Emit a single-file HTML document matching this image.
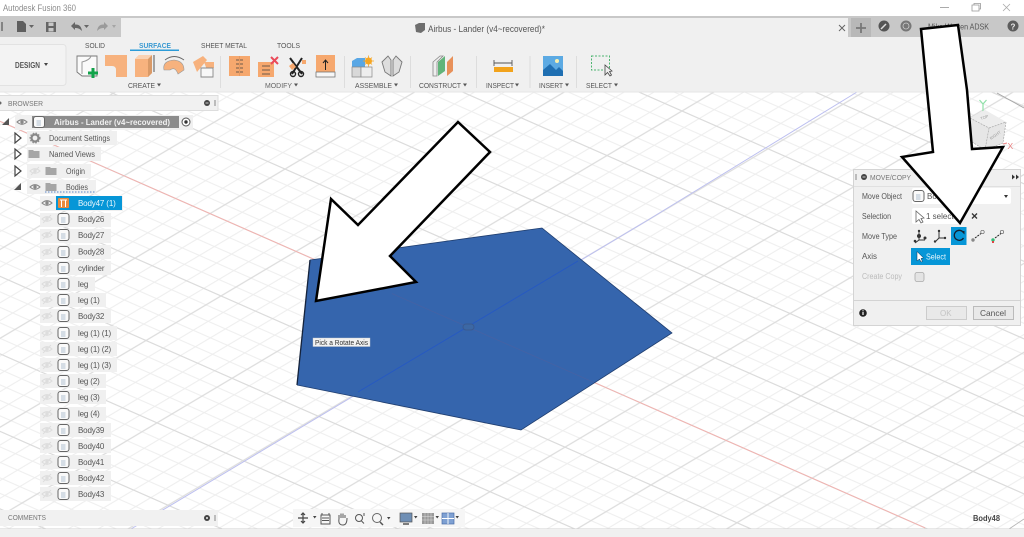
<!DOCTYPE html>
<html><head><meta charset="utf-8"><title>Autodesk Fusion 360</title>
<style>
html,body{margin:0;padding:0;background:#fff;width:1024px;height:537px;overflow:hidden}
svg{display:block;font-family:"Liberation Sans",sans-serif;filter:blur(.3px);overflow:hidden}
text{fill:#555}
.t{font-size:8px;letter-spacing:-.15px}
</style></head><body>
<svg xmlns="http://www.w3.org/2000/svg" width="1024" height="537" viewBox="0 0 1024 537">
<defs>
<pattern id="g" patternUnits="userSpaceOnUse" width="100" height="100" patternTransform="matrix(.86 .378 .75 -.4455 387.5 330.375)">
<path d="M10 0V100M30 0V100M70 0V100M90 0V100M0 10H100M0 30H100M0 70H100M0 90H100" stroke="#eeeeee" stroke-width="1.400" fill="none"/>
<path d="M50 0V100M0 50H100" stroke="#dcdcdc" stroke-width="1.600" fill="none"/>
</pattern>
<g id="eye"><path d="M-5 0Q0-4.500 5 0Q0 4.500-5 0Z" fill="none" stroke="#888" stroke-width="1.100"/><circle r="1.700" fill="#888"/></g>
<g id="eyeoff"><path d="M-5 0Q0-4.500 5 0Q0 4.500-5 0Z" fill="none" stroke="#ddd" stroke-width="1.100"/><circle r="1.700" fill="#ddd"/><path d="M-4 4L4-4" stroke="#ddd"/></g>
<g id="body"><rect x="-5.500" y="-5.500" width="11" height="11" rx="2.500" fill="#fafafa" stroke="#666" stroke-width="1"/><rect x="-2.500" y="-2" width="4.500" height="6" fill="#d5dde5"/></g>
<g id="folder"><path d="M-5.500-4H-1L0-3H5.500V4H-5.500Z" fill="#a6a6a6"/></g>
<path id="tri" d="M-3-5L3 0L-3 5Z" fill="#fff" stroke="#444" stroke-width="1.200"/>
</defs>

<!-- canvas -->
<rect width="1024" height="537" fill="#fff"/>
<rect y="92" width="1024" height="437" fill="url(#g)"/>
<path d="M0 121.300L925 527.800" stroke="#f2b3b0" stroke-width="1"/>
<path d="M131 529L648 220L857 92" stroke="#bcbff0" stroke-width="1" fill="none"/>
<path d="M997 93L1024 108" stroke="#a5a5a5" stroke-width=".9"/>
<path d="M1009 529L1024 519" stroke="#b5b5b5" stroke-width=".9"/>

<!-- pentagon -->
<path d="M310 260L542 228L672 333L521 430L297 385Z" fill="#3565ad"/>
<path d="M310 260L297 385" stroke="#15233c" stroke-width="1.300"/>
<path d="M310 260L542 228L672 333L521 430L297 385" fill="none" stroke="#1f3d6e" stroke-width=".8"/>
<path d="M392 293.600L594 382.400" stroke="#55609c" stroke-width=".7" opacity=".6"/>
<path d="M358 392L578 261" stroke="#2558c4" stroke-width=".8"/>
<rect x="463" y="324" width="11" height="6" rx="3" fill="#3c68a5" stroke="#3a5a90" stroke-width="1"/>
<rect x="313" y="338" width="57" height="8.500" fill="#f2f2f2" stroke="#ccc" stroke-width=".4"/>
<text x="315" y="345" font-size="7" textLength="53" lengthAdjust="spacingAndGlyphs" style="fill:#333">Pick a Rotate Axis</text>

<!-- title bar -->
<rect width="1024" height="16" fill="#fff"/>
<text x="3" y="11" font-size="8.800" textLength="73" lengthAdjust="spacingAndGlyphs" style="fill:#8c8c8c">Autodesk Fusion 360</text>
<path d="M940 7.500H949" stroke="#aaa"/>
<path d="M972 5H979V11H972ZM974 5V3.500H980.500V9H979" fill="none" stroke="#999" stroke-width=".8"/>
<path d="M1003 4L1010 11M1010 4L1003 11" stroke="#aaa" stroke-width=".8"/>
<rect y="16" width="1024" height="21" fill="#c8c8c8"/>
<rect x="121" y="18" width="727" height="19" fill="#f0f0f0"/>
<rect y="37" width="1024" height="55" fill="#f0f0f0"/>
<rect y="91.500" width="1024" height="1" fill="#e6e6e6"/>

<!-- quick access -->
<path d="M1 22H3V31H1Z" fill="#666" opacity=".7"/>
<path d="M17 21H23L26 24V32H17Z" fill="#5f5f5f"/><path d="M29 25H34L31.500 28Z" fill="#666"/>
<path d="M46 22H56V32H46Z" fill="#666"/><rect x="48.500" y="22.500" width="5" height="3.500" fill="#c8c8c8"/><rect x="48.500" y="28" width="5" height="3.500" fill="#c8c8c8"/>
<path d="M71 26L75 22V24.500Q81 24 82 31Q79 27.500 75 28V30Z" fill="#666"/><path d="M84 25H89L86.500 28Z" fill="#666"/>
<path d="M108 26L104 22V24.500Q98 24 97 31Q100 27.500 104 28V30Z" fill="#9a9a9a"/><path d="M112 25H116L114 28Z" fill="#a5a5a5"/>

<!-- doc tab -->
<path d="M415 25L419 23H425V30L421 33L416 32Z" fill="#6e6e6e"/>
<text x="428" y="32" font-size="9.200" textLength="117" lengthAdjust="spacingAndGlyphs">Airbus - Lander (v4~recovered)*</text>
<path d="M839 25L845 31M845 25L839 31" stroke="#666" stroke-width="1"/>
<rect x="851" y="18" width="20" height="19" fill="#b8b8b8"/>
<path d="M861 23V33M856 28H866" stroke="#777" stroke-width="1.800"/>
<circle cx="884" cy="26" r="5.500" fill="#555"/><path d="M881 29L886 24" stroke="#ddd" stroke-width="1.500"/>
<circle cx="906" cy="26" r="5.500" fill="#777"/><circle cx="906" cy="26" r="3" fill="none" stroke="#ccc" stroke-width=".8"/>
<text x="928" y="29.500" font-size="8.200" textLength="61" lengthAdjust="spacingAndGlyphs">Mike Warren ADSK</text>
<circle cx="1013" cy="26" r="5.500" fill="#5c5c5c"/><text x="1010.500" y="29.500" font-size="8" font-weight="bold" style="fill:#eee">?</text>

<!-- tabs -->
<text x="85" y="48" font-size="7.200" textLength="20" lengthAdjust="spacingAndGlyphs">SOLID</text>
<text x="139" y="48" font-size="7.200" textLength="32" lengthAdjust="spacingAndGlyphs" font-weight="bold" style="fill:#3a9ad2">SURFACE</text>
<rect x="130" y="49.500" width="49" height="1.500" fill="#2b9bd8"/>
<text x="201" y="48" font-size="7.200" textLength="46" lengthAdjust="spacingAndGlyphs">SHEET METAL</text>
<text x="277" y="48" font-size="7.200" textLength="23" lengthAdjust="spacingAndGlyphs">TOOLS</text>

<!-- design -->
<rect x="-4" y="44.500" width="70" height="41" rx="3" fill="#f3f3f3" stroke="#e2e2e2"/>
<text x="15" y="68" font-size="7.800" font-weight="bold" textLength="25" lengthAdjust="spacingAndGlyphs">DESIGN</text>
<path d="M44 63H48L46 66Z" fill="#444"/>

<!-- create icons -->
<path d="M77 56H97V76H82L77 72Z" fill="#fafafa" stroke="#777" stroke-width=".9"/>
<path d="M82 74V62Q90 60 91 56" fill="none" stroke="#999"/>
<path d="M93 68V78M88 73H98" stroke="#12a34a" stroke-width="3"/>
<path d="M105 55H127V77H116V70Q116 66 112 66H105Z" fill="#f7b27e"/>
<path d="M135 59L139 55H152V73L148 77H135Z" fill="#f7b27e"/><path d="M148 59V77L152 73V55Z" fill="#d99a68"/><path d="M135 59H148L152 55H139Z" fill="#fad2b3"/>
<path d="M154 55V72" stroke="#444" stroke-width=".9"/>
<path d="M164 70Q162 61 174 60Q184 61 184 70L178 74Q175 66 170 70Z" fill="#f7b27e" stroke="#999" stroke-width=".6"/>
<path d="M165 60Q174 53 184 60" fill="none" stroke="#666" stroke-width=".9"/>
<path d="M193 62L203 56L207 60L197 72Z" fill="#f7b27e"/><path d="M204 62L214 62V68L207 70Z" fill="#f7b27e"/>
<path d="M201 68H213V77H201Z" fill="#f8f8f8" stroke="#888" stroke-width=".9"/>
<text x="128" y="88" font-size="7.600" textLength="27" lengthAdjust="spacingAndGlyphs">CREATE</text><path d="M157 83.500H161L159 86.500Z" fill="#555"/>
<path d="M220.500 56V88" stroke="#ddd"/>

<!-- modify icons -->
<rect x="229" y="56" width="21" height="20" fill="#f6a86e"/>
<path d="M236 60H243M236 64H243M236 68H243M236 72H243" stroke="#6e5a4a" stroke-width="1"/><path d="M239.500 56V76" stroke="#e59a63" stroke-width="1"/>
<rect x="258" y="62" width="16" height="15" fill="#f6a86e"/>
<path d="M262 66H270M262 70H270M262 74H270" stroke="#6e5a4a"/>
<path d="M271 57L278 64M278 57L271 64" stroke="#ea4a5a" stroke-width="2"/>
<path d="M290 58L302 74M302 58L292 74" stroke="#222" stroke-width="2"/>
<circle cx="293" cy="74" r="2.500" fill="none" stroke="#222" stroke-width="1.400"/><circle cx="301" cy="74" r="2.500" fill="none" stroke="#222" stroke-width="1.400"/>
<rect x="302" y="60" width="4" height="4" fill="#f6a86e"/><path d="M289 66L293 63L296 67L292 70Z" fill="#f6a86e"/>
<rect x="316" y="55" width="19" height="17" fill="#f6a86e"/><rect x="316" y="72" width="19" height="5" fill="#f7f7f7" stroke="#777" stroke-width=".8"/>
<path d="M325.500 70V61M323 63L325.500 60L328 63" stroke="#222" fill="none"/>
<text x="265" y="88" font-size="7.600" textLength="27" lengthAdjust="spacingAndGlyphs" style="fill:#666">MODIFY</text><path d="M294 83.500H298L296 86.500Z" fill="#555"/>
<path d="M344.500 56V88" stroke="#ddd"/>

<!-- assemble -->
<path d="M352 61L357 58H365V68H352Z" fill="#59a7e5"/><path d="M352 67H361V77H352Z" fill="#d8d8d8" stroke="#888" stroke-width=".7"/><path d="M361 67H372V77H361Z" fill="#eee" stroke="#888" stroke-width=".7"/>
<circle cx="368.500" cy="61" r="3.500" fill="#f6a623"/><path d="M368.500 55.500V66.500M363 61H374M365 57.500L372 64.500M372 57.500L365 64.500" stroke="#f6a623" stroke-width=".8"/>
<path d="M382 62L388 56L391 60V76L385 72Z" fill="#ddd" stroke="#777" stroke-width=".9"/><path d="M402 62L396 56L393 60V76L399 72Z" fill="#ddd" stroke="#777" stroke-width=".9"/>
<text x="355" y="88" font-size="7.600" textLength="37" lengthAdjust="spacingAndGlyphs">ASSEMBLE</text><path d="M394 83.500H398L396 86.500Z" fill="#555"/>
<path d="M410.500 56V88" stroke="#ddd"/>

<!-- construct -->
<path d="M433 62L440 56H443L437 62V76H433Z" fill="#eee" stroke="#888" stroke-width=".8"/>
<path d="M438 62L445 56V71L438 76Z" fill="#62b47a"/>
<path d="M447 62L453 56V71L447 76Z" fill="#e8915a"/>
<text x="419" y="88" font-size="7.600" textLength="42" lengthAdjust="spacingAndGlyphs">CONSTRUCT</text><path d="M463 83.500H467L465 86.500Z" fill="#555"/>
<path d="M476.500 56V88" stroke="#ddd"/>

<!-- inspect -->
<path d="M494 63H512M494 60V66M512 60V66" stroke="#555" stroke-width=".9"/>
<rect x="494" y="67" width="19" height="5" fill="#f2a31c"/>
<text x="486" y="88" font-size="7.600" textLength="28" lengthAdjust="spacingAndGlyphs">INSPECT</text><path d="M515 83.500H519L517 86.500Z" fill="#555"/>
<path d="M530 56V88" stroke="#ddd"/>

<!-- insert -->
<rect x="543" y="56" width="20" height="20" fill="#5caae3"/>
<circle cx="557" cy="61" r="2" fill="#f7efb0"/>
<path d="M543 76V70L550 64L556 70L559 67L563 71V76Z" fill="#1f6fb2"/>
<text x="539" y="88" font-size="7.600" textLength="24" lengthAdjust="spacingAndGlyphs">INSERT</text><path d="M565 83.500H569L567 86.500Z" fill="#555"/>
<path d="M576.500 56V88" stroke="#ddd"/>

<!-- select -->
<rect x="591.500" y="56" width="18" height="14" fill="none" stroke="#4cb56f" stroke-width="1" stroke-dasharray="2 1.500"/>
<path d="M605 65L605 75L607.500 72.500L610 76L611.500 75L609.500 71.500L612 71Z" fill="#eee" stroke="#444" stroke-width=".8"/>
<text x="586" y="88" font-size="7.600" textLength="26" lengthAdjust="spacingAndGlyphs">SELECT</text><path d="M614 83.500H618L616 86.500Z" fill="#555"/>

<!-- browser header -->
<rect x="-2" y="95.500" width="220" height="15" fill="#f1f1f1" stroke="#ddd"/>
<circle cx="0" cy="103" r="1.500" fill="#666"/>
<text x="8" y="106" font-size="7.500" textLength="35" lengthAdjust="spacingAndGlyphs" style="fill:#777">BROWSER</text>
<circle cx="207" cy="103" r="3" fill="#444"/><path d="M205.500 103H208.500" stroke="#eee" stroke-width=".8"/>
<path d="M215 100V106" stroke="#aaa" stroke-width="1.500"/>

<!-- tree chips -->
<g fill="#f0f0f0">
<rect x="15" y="115" width="178" height="15"/>
<rect x="27" y="131" width="90" height="14"/>
<rect x="27" y="147" width="74" height="14"/>
<rect x="27" y="164" width="64" height="14"/>
<rect x="27" y="180" width="69" height="14"/>
<rect x="40" y="196" width="83" height="15"/>
<rect x="40" y="213" width="71" height="14"/><rect x="40" y="229" width="71" height="14"/><rect x="40" y="245" width="71" height="14"/>
<rect x="40" y="261" width="71" height="14"/><rect x="40" y="277" width="55" height="14"/><rect x="40" y="293" width="66" height="14"/>
<rect x="40" y="309" width="71" height="14"/><rect x="40" y="326" width="77" height="14"/><rect x="40" y="342" width="77" height="14"/>
<rect x="40" y="358" width="77" height="14"/><rect x="40" y="374" width="66" height="14"/><rect x="40" y="390" width="66" height="14"/>
<rect x="40" y="407" width="66" height="14"/><rect x="40" y="423" width="71" height="14"/><rect x="40" y="439" width="71" height="14"/>
<rect x="40" y="455" width="71" height="14"/><rect x="40" y="471" width="71" height="14"/><rect x="40" y="487" width="71" height="14"/>
</g>

<!-- root -->
<path d="M2 125L9 118V125Z" fill="#555"/>
<use href="#eye" x="22" y="122"/>
<rect x="32" y="116" width="147" height="12" fill="#8c8c8c"/>
<use href="#body" x="39" y="122"/>
<text x="54" y="125" font-size="8.300" font-weight="bold" textLength="116" lengthAdjust="spacingAndGlyphs" style="fill:#f2f2f2">Airbus - Lander (v4~recovered)</text>
<circle cx="186" cy="122" r="4" fill="#fff" stroke="#555"/><circle cx="186" cy="122" r="1.700" fill="#333"/>

<use href="#tri" x="18" y="138"/>
<circle cx="35" cy="138" r="3.500" fill="none" stroke="#888" stroke-width="2.200"/><circle cx="35" cy="138" r="5" fill="none" stroke="#888" stroke-width="1" stroke-dasharray="1.500 1.500"/>
<text x="49" y="141" font-size="8" textLength="61" lengthAdjust="spacingAndGlyphs">Document Settings</text>
<use href="#tri" x="18" y="154"/><use href="#folder" x="34" y="154"/>
<text x="49" y="157" font-size="8" textLength="46" lengthAdjust="spacingAndGlyphs">Named Views</text>
<use href="#tri" x="18" y="171"/><use href="#eyeoff" x="35" y="171"/><use href="#folder" x="51" y="171"/>
<text x="66" y="174" font-size="8" textLength="19" lengthAdjust="spacingAndGlyphs">Origin</text>
<path d="M14 190L21 183V190Z" fill="#555"/><use href="#eye" x="35" y="187"/><use href="#folder" x="51" y="187"/>
<text x="66" y="190" font-size="8" textLength="22" lengthAdjust="spacingAndGlyphs">Bodies</text>
<path d="M45 192H95" stroke="#5c86c8" stroke-width="1" stroke-dasharray="1.500 1.500"/>

<!-- body rows -->
<use href="#eye" x="47" y="203"/>
<rect x="56" y="196" width="66" height="14" fill="#0696d7"/>
<rect x="58" y="198" width="11" height="10" rx="1" fill="#e88a3c"/><path d="M60 200H67M61.500 200V207M65.500 200V207" stroke="#fff" stroke-width="1"/>
<text x="78" y="206" class="t" style="fill:#eef8fd">Body47 (1)</text>

<use href="#eyeoff" x="47" y="219"/><use href="#body" x="63.500" y="219"/><text x="78" y="222" class="t">Body26</text>
<use href="#eyeoff" x="47" y="235"/><use href="#body" x="63.500" y="235"/><text x="78" y="238" class="t">Body27</text>
<use href="#eyeoff" x="47" y="252"/><use href="#body" x="63.500" y="252"/><text x="78" y="254.500" class="t">Body28</text>
<use href="#eyeoff" x="47" y="268"/><use href="#body" x="63.500" y="268"/><text x="78" y="271" class="t">cylinder</text>
<use href="#eyeoff" x="47" y="284"/><use href="#body" x="63.500" y="284"/><text x="78" y="287" class="t">leg</text>
<use href="#eyeoff" x="47" y="300"/><use href="#body" x="63.500" y="300"/><text x="78" y="303" class="t">leg (1)</text>
<use href="#eyeoff" x="47" y="316"/><use href="#body" x="63.500" y="316"/><text x="78" y="319" class="t">Body32</text>
<use href="#eyeoff" x="47" y="333"/><use href="#body" x="63.500" y="333"/><text x="78" y="336" class="t">leg (1) (1)</text>
<use href="#eyeoff" x="47" y="349"/><use href="#body" x="63.500" y="349"/><text x="78" y="352" class="t">leg (1) (2)</text>
<use href="#eyeoff" x="47" y="365"/><use href="#body" x="63.500" y="365"/><text x="78" y="368" class="t">leg (1) (3)</text>
<use href="#eyeoff" x="47" y="381"/><use href="#body" x="63.500" y="381"/><text x="78" y="384" class="t">leg (2)</text>
<use href="#eyeoff" x="47" y="397"/><use href="#body" x="63.500" y="397"/><text x="78" y="400" class="t">leg (3)</text>
<use href="#eyeoff" x="47" y="414"/><use href="#body" x="63.500" y="414"/><text x="78" y="416.500" class="t">leg (4)</text>
<use href="#eyeoff" x="47" y="430"/><use href="#body" x="63.500" y="430"/><text x="78" y="433" class="t">Body39</text>
<use href="#eyeoff" x="47" y="446"/><use href="#body" x="63.500" y="446"/><text x="78" y="449" class="t">Body40</text>
<use href="#eyeoff" x="47" y="462"/><use href="#body" x="63.500" y="462"/><text x="78" y="465" class="t">Body41</text>
<use href="#eyeoff" x="47" y="478"/><use href="#body" x="63.500" y="478"/><text x="78" y="481" class="t">Body42</text>
<use href="#eyeoff" x="47" y="494"/><use href="#body" x="63.500" y="494"/><text x="78" y="497" class="t">Body43</text>

<!-- comments -->
<rect x="0" y="510" width="218" height="16" fill="#f1f1f1"/>
<text x="8" y="520" font-size="7.500" textLength="38" lengthAdjust="spacingAndGlyphs" style="fill:#777">COMMENTS</text>
<circle cx="207" cy="518" r="3" fill="#444"/><circle cx="207" cy="518" r="1" fill="#eee"/>
<path d="M215 515V521" stroke="#aaa" stroke-width="1.500"/>

<!-- bottom bar -->
<rect y="528.500" width="1024" height="1" fill="#d0d0d0"/>
<rect y="529" width="1024" height="8" fill="#f0f0f0"/>
<rect x="293" y="509" width="172" height="18" fill="#f6f6f6"/>
<path d="M303 513V523M298 518H308M301 515L303 513L305 515M301 521L303 523L305 521" stroke="#444" stroke-width="1.200" fill="none"/>
<path d="M313 516H316.500L314.700 518.500Z" fill="#444"/>
<rect x="321" y="515" width="9" height="9" fill="none" stroke="#555"/><path d="M322 513V515M329 513V515M322 518H329M322 520.500H329" stroke="#555"/>
<path d="M339 519V515M341 518V513.500M343 518V513.500M345 518V515M339 519Q338 525 343 525Q347 525 347 518" fill="none" stroke="#555"/>
<circle cx="359" cy="518" r="3.500" fill="none" stroke="#555"/><path d="M361.500 521L364 523.500M364 513V516" stroke="#555"/>
<circle cx="377" cy="518" r="4.500" fill="none" stroke="#666"/><path d="M380 522L383 525" stroke="#555" stroke-width="1.500"/>
<path d="M387 517H390.500L388.700 519.500Z" fill="#444"/>
<rect x="400" y="513" width="12" height="9" fill="#6f8fb5" stroke="#555" stroke-width=".7"/><path d="M403 524H409" stroke="#555" stroke-width="1.500"/>
<path d="M414 516H417.500L415.700 518.500Z" fill="#444"/>
<rect x="422" y="513" width="12" height="11" fill="#999"/><path d="M425 513V524M428 513V524M431 513V524M422 516.500H434M422 520H434" stroke="#ddd" stroke-width=".5"/>
<path d="M435.500 516H439L437.200 518.500Z" fill="#444"/>
<rect x="442" y="513" width="12" height="11" fill="#7ea0d2" stroke="#4a6ea8" stroke-width=".7"/><path d="M448 513V524M442 518.500H454" stroke="#fff" stroke-width=".9"/>
<path d="M455.500 516H459L457.200 518.500Z" fill="#444"/>
<text x="973" y="521" font-size="8" font-weight="bold" textLength="27" lengthAdjust="spacingAndGlyphs" style="fill:#444">Body48</text>

<!-- view cube -->
<path d="M979.500 100L983 104L986.500 100M983 104V116" stroke="#8fe0a8" stroke-width="1.200" fill="none"/>
<path d="M1003 144L1007 143" stroke="#e88" stroke-width="1"/>
<text x="1007.500" y="149" font-size="8.500" style="fill:#e98080">X</text>
<path d="M970 118L985 110L1006 122L1003 143L985 150L972 142Z" fill="#e6e6e6"/>
<path d="M970 118L985 110L1006 122L989 128Z" fill="#ededed"/>
<path d="M970 118L989 128L985 150M989 128L1006 122M1006 122L1003 143L985 150L972 142L970 118" fill="none" stroke="#aaa" stroke-width=".7" stroke-dasharray="2 1"/>
<text x="981" y="120" font-size="4" transform="rotate(-20 981 120)" style="fill:#999">TOP</text>
<text x="991" y="140" font-size="4" transform="rotate(-35 991 140)" style="fill:#999">RIGHT</text>

<!-- dialog -->
<rect x="853.500" y="169.500" width="167" height="156" fill="#f0f0f0" stroke="#d4d4d4"/>
<path d="M856 174V180" stroke="#999" stroke-width="1.200"/>
<circle cx="864" cy="177" r="3" fill="#444"/><path d="M862.500 177H865.500" stroke="#eee" stroke-width=".8"/>
<text x="870" y="180" font-size="7.300" textLength="41" lengthAdjust="spacingAndGlyphs" style="fill:#777">MOVE/COPY</text>
<path d="M1012 174.500L1015 177L1012 179.500ZM1016 174.500L1019 177L1016 179.500Z" fill="#333"/>
<rect x="854" y="186" width="166" height=".8" fill="#ddd"/>
<text x="862" y="199" font-size="7.800" textLength="40" lengthAdjust="spacingAndGlyphs">Move Object</text>
<rect x="912" y="188" width="99" height="16" rx="2" fill="#fff"/>
<use href="#body" x="918.500" y="196"/>
<text x="927" y="199" font-size="8">Body47</text>
<path d="M1004 195H1008L1006 198Z" fill="#333"/>
<text x="862" y="219" font-size="7.800" textLength="29" lengthAdjust="spacingAndGlyphs">Selection</text>
<rect x="912" y="208" width="50" height="16" rx="2" fill="#fff"/>
<path d="M916 211V222L919 219.500L921 223L923 222L921 218.500L924 218Z" fill="#fff" stroke="#666" stroke-width=".8"/>
<text x="926" y="219" font-size="8">1 selected</text>
<path d="M972 213.500L977 218.500M977 213.500L972 218.500" stroke="#333" stroke-width="1.300"/>
<text x="862" y="239" font-size="7.800" textLength="35" lengthAdjust="spacingAndGlyphs">Move Type</text>
<path d="M919 231V240H925M919 240L915 243" fill="none" stroke="#333" stroke-width="1"/><circle cx="919" cy="236" r="2" fill="#333"/><circle cx="919" cy="231" r="1.200" fill="#333"/><circle cx="925" cy="238" r="1.500" fill="#333"/><circle cx="915" cy="241" r="1.300" fill="#333"/>
<path d="M939 232V238H945M939 238L935 242" fill="none" stroke="#333" stroke-width="1"/><circle cx="939" cy="231" r="1.200" fill="#333"/><circle cx="945" cy="238" r="1.200" fill="#333"/><circle cx="935" cy="241.500" r="1.200" fill="#333"/>
<rect x="951" y="227" width="15.500" height="18" fill="#0696d7"/>
<path d="M963 232A5 5 0 1 0 963.500 238" fill="none" stroke="#123" stroke-width="1.300"/><path d="M961 231H964.500V234.500Z" fill="#123"/>
<circle cx="973" cy="240" r="1.700" fill="#888"/><circle cx="982.500" cy="232" r="1.700" fill="none" stroke="#666" stroke-width=".7"/><path d="M975 238L981 233.500" stroke="#222" stroke-dasharray="2 1"/>
<circle cx="993" cy="240" r="1.700" fill="#3b7"/><rect x="992" y="241" width="2" height="2" fill="#d44"/><circle cx="1002" cy="232" r="1.700" fill="none" stroke="#666" stroke-width=".7"/><path d="M995 238L1001 233.500" stroke="#222" stroke-dasharray="2 1"/>
<text x="862" y="259" font-size="7.800" textLength="15" lengthAdjust="spacingAndGlyphs">Axis</text>
<rect x="911" y="248" width="39" height="17" fill="#0696d7"/>
<path d="M917 251.500V261L919.500 259L921 262L922.500 261.500L921 258.500L923.500 258Z" fill="#fff" stroke="#135" stroke-width=".5"/>
<text x="926" y="259.500" font-size="8" textLength="20" lengthAdjust="spacingAndGlyphs" style="fill:#e8f6fc">Select</text>
<text x="862" y="279" font-size="7.800" textLength="40" lengthAdjust="spacingAndGlyphs" style="fill:#bbb">Create Copy</text>
<rect x="915" y="272.500" width="9" height="9" rx="2" fill="#e4e4e4" stroke="#aaa" stroke-width=".8"/>
<rect x="854" y="300" width="166" height=".8" fill="#ccc"/>
<circle cx="863" cy="313" r="3.800" fill="#222"/><rect x="862.400" y="312" width="1.200" height="3" fill="#fff"/><rect x="862.400" y="310.300" width="1.200" height="1" fill="#fff"/>
<rect x="926.500" y="306.500" width="40" height="13" fill="#e9e9e9" stroke="#ccc"/>
<text x="940" y="316" font-size="8" style="fill:#c4c4c4">OK</text>
<rect x="973.500" y="306.500" width="40" height="13" fill="#e9e9e9" stroke="#bbb"/>
<text x="980" y="316" font-size="8.300" textLength="26" lengthAdjust="spacingAndGlyphs">Cancel</text>

<!-- annotation arrows -->
<path d="M458 122L490 152L390 256L416 282L316 301L331 199L358 225Z" fill="#fff" stroke="#000" stroke-width="2.500" stroke-linejoin="miter"/>
<path d="M921 29L958 25L967 90L972 149L1003 147L960 223L902 157L933 152Z" fill="#fff" stroke="#000" stroke-width="2.500" stroke-linejoin="miter"/>
</svg>
</body></html>
